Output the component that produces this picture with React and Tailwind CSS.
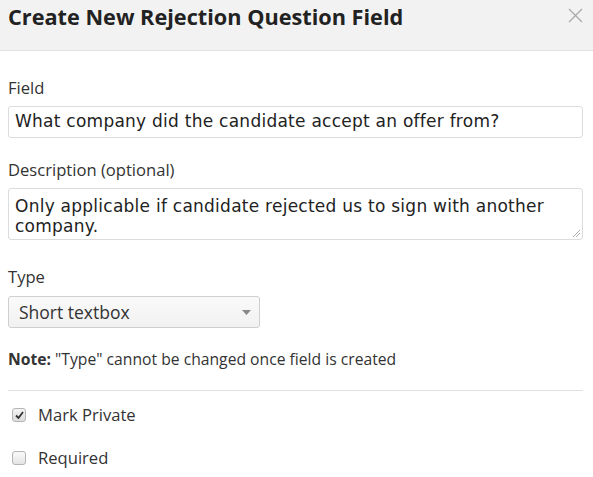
import React from 'react';

const Label = ({ children }) => (
  <div className="text-[16.6px] leading-[22px] text-[#333]">{children}</div>
);

const App = () => {
  return (
    <div className="w-[593px] h-[477px] bg-white overflow-hidden font-['Open_Sans',sans-serif] text-[#333]">
      <div className="h-[51px] bg-[#f2f2f2] border-b border-[#e3e3e3] flex items-start justify-between pl-2 pr-[10px] pt-[3px]">
        <h1 className="text-[21.7px] font-bold leading-[28px] text-[#222]">Create New Rejection Question Field</h1>
        <svg width="15" height="15" viewBox="0 0 15 15" className="mt-[5px]">
          <path d="M1 1 L14 14 M14 1 L1 14" stroke="#a8a8a8" strokeWidth="1.2" />
        </svg>
      </div>

      <div className="px-2 pt-[26px]">
        <Label>Field</Label>
        <div className="mt-[7px] w-[575px] h-[32px] border border-[#dcdcdc] rounded-[3px] flex items-center px-[6px] font-['DejaVu_Sans',sans-serif] text-[17px] tracking-[0.25px] text-[#222]">
          What company did the candidate accept an offer from?
        </div>

        <div className="mt-[21px]">
          <Label>Description (optional)</Label>
        </div>
        <div className="relative mt-[7px] w-[575px] h-[52px] border border-[#dcdcdc] rounded-[3px] pl-[6px] pr-[16px] pt-[7px] font-['DejaVu_Sans',sans-serif] text-[17px] tracking-[0.25px] leading-[20px] text-[#222]">
          Only applicable if candidate rejected us to sign with another company.
          <svg width="7" height="7" viewBox="0 0 7 7" className="absolute right-[2px] bottom-[2px]">
            <path d="M0 7 L7 0 M3 7 L7 3" stroke="#999" strokeWidth="0.8" />
          </svg>
        </div>

        <div className="mt-[26px]">
          <Label>Type</Label>
        </div>
        <div className="mt-[8px] w-[252px] h-[32px] border border-[#cfcfcf] rounded-[3px] bg-gradient-to-b from-[#fafafa] to-[#f1f1f1] flex items-center justify-between pl-[10px] pr-[8px] text-[17.5px] text-[#333]">
          <span>Short textbox</span>
          <svg width="9" height="5" viewBox="0 0 9 5">
            <path d="M0 0 H9 L4.5 5 Z" fill="#888" />
          </svg>
        </div>

        <div className="mt-[20px] text-[15.7px] leading-[22px] text-[#333]">
          <span className="font-bold">Note:</span> "Type" cannot be changed once field is created
        </div>

        <div className="mt-[20px] w-[575px] border-t border-[#e0e0e0]" />

        <div className="mt-[13px] flex items-center gap-[12px] pl-1">
          <span className="w-[14px] h-[14px] rounded-[3px] border border-[#b5b5b5] bg-gradient-to-b from-[#f4f4f4] to-[#dcdcdc] flex items-center justify-center">
            <svg width="9" height="8" viewBox="0 0 9 8">
              <path d="M1 4.5 L3.5 7 L8 1" stroke="#333" strokeWidth="1.8" fill="none" />
            </svg>
          </span>
          <span className="text-[16.6px] leading-[22px]">Mark Private</span>
        </div>

        <div className="mt-[21px] flex items-center gap-[12px] pl-1">
          <span className="w-[14px] h-[14px] rounded-[3px] border border-[#b5b5b5] bg-gradient-to-b from-[#fafafa] to-[#e4e4e4]" />
          <span className="text-[16.6px] leading-[22px]">Required</span>
        </div>
      </div>
    </div>
  );
};

export default App;
